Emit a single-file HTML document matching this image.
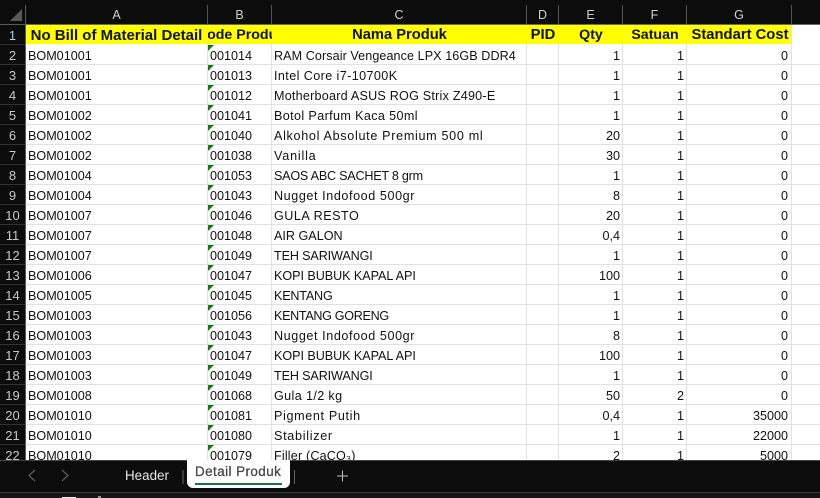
<!DOCTYPE html>
<html><head><meta charset="utf-8">
<style>
html,body{margin:0;padding:0;background:#0c0c0c}
#p{position:relative;width:820px;height:498px;overflow:hidden;background:#0c0c0c;font-family:"Liberation Sans",sans-serif}
#p div{position:absolute;white-space:nowrap}
#sheet{left:26px;top:25px;width:794px;height:435px;background:#fff;overflow:hidden}
.hl{left:0;width:794px;height:1px;background:#e1e1e1}
.vl{top:0;width:1px;height:435px;background:#e1e1e1}
.r{left:0;width:794px;height:20px;font-size:12.6px;line-height:22px;color:#111}
.a{left:2px}
.b{left:184px}
.c{left:248px}
.e{right:200px;width:60px;text-align:right}
.f{right:136px;width:60px;text-align:right}
.g{right:32px;width:90px;text-align:right}
.t{left:182px;top:0;width:0;height:0;border-top:6px solid #107c10;border-right:6px solid transparent}
#y{left:0;top:0;width:765px;height:19px;background:#ff0;overflow:hidden}
.h{top:0;height:19px;line-height:21px;font-weight:bold;font-size:14.2px;color:#111;text-align:center;overflow:hidden}
.ch{top:5px;height:19px;line-height:20px;font-size:12.5px;color:#cfcfcf;text-align:center;border-right:1px solid #555;box-sizing:border-box}
.rh{left:0;width:25px;height:20px;line-height:21px;font-size:13px;color:#c8c8c8;text-align:center;box-sizing:border-box;border-bottom:1px solid #333}
</style></head><body>
<div id="p">
<div style="left:0;top:0;width:820px;height:5px;background:#0c0c0c"></div>
<svg style="position:absolute;left:0;top:0" width="26" height="25"><polygon points="22,9 22,21 10,21" fill="#5a5a5a"/></svg>
<div style="left:25px;top:5px;width:1px;height:455px;background:#5a5a5a"></div>
<div style="left:26px;top:24px;width:794px;height:1px;background:#6a6a6a"></div>
<div style="left:0;top:24px;width:25px;height:1px;background:#5a5a5a"></div>
<div class="ch" style="left:26px;width:182px">A</div>
<div class="ch" style="left:208px;width:64px">B</div>
<div class="ch" style="left:272px;width:255px">C</div>
<div class="ch" style="left:527px;width:32px">D</div>
<div class="ch" style="left:559px;width:64px">E</div>
<div class="ch" style="left:623px;width:64px">F</div>
<div class="ch" style="left:687px;width:105px">G</div>

<div class="rh" style="top:25px;color:#9fd3e8">1</div>
<div class="rh" style="top:45px">2</div>
<div class="rh" style="top:65px">3</div>
<div class="rh" style="top:85px">4</div>
<div class="rh" style="top:105px">5</div>
<div class="rh" style="top:125px">6</div>
<div class="rh" style="top:145px">7</div>
<div class="rh" style="top:165px">8</div>
<div class="rh" style="top:185px">9</div>
<div class="rh" style="top:205px">10</div>
<div class="rh" style="top:225px">11</div>
<div class="rh" style="top:245px">12</div>
<div class="rh" style="top:265px">13</div>
<div class="rh" style="top:285px">14</div>
<div class="rh" style="top:305px">15</div>
<div class="rh" style="top:325px">16</div>
<div class="rh" style="top:345px">17</div>
<div class="rh" style="top:365px">18</div>
<div class="rh" style="top:385px">19</div>
<div class="rh" style="top:405px">20</div>
<div class="rh" style="top:425px">21</div>
<div class="rh" style="top:445px">22</div>

<div id="sheet">
<div class="vl" style="left:181px"></div><div class="vl" style="left:245px"></div><div class="vl" style="left:500px"></div><div class="vl" style="left:532px"></div><div class="vl" style="left:596px"></div><div class="vl" style="left:660px"></div><div class="vl" style="left:765px"></div>
<div class="hl" style="top:39px"></div><div class="hl" style="top:59px"></div><div class="hl" style="top:79px"></div><div class="hl" style="top:99px"></div><div class="hl" style="top:119px"></div><div class="hl" style="top:139px"></div><div class="hl" style="top:159px"></div><div class="hl" style="top:179px"></div><div class="hl" style="top:199px"></div><div class="hl" style="top:219px"></div><div class="hl" style="top:239px"></div><div class="hl" style="top:259px"></div><div class="hl" style="top:279px"></div><div class="hl" style="top:299px"></div><div class="hl" style="top:319px"></div><div class="hl" style="top:339px"></div><div class="hl" style="top:359px"></div><div class="hl" style="top:379px"></div><div class="hl" style="top:399px"></div><div class="hl" style="top:419px"></div>
<div id="y">
<div class="h" style="left:0;width:181px;font-size:15px">No Bill of Material Detail</div>
<div class="h" style="left:182px;width:64px"><span style="position:absolute;left:-17px;width:100px;text-align:center">Kode Produk</span></div>
<div class="h" style="left:246px;width:255px;font-size:14.7px">Nama Produk</div>
<div class="h" style="left:501px;width:32px;font-size:14.8px">PID</div>
<div class="h" style="left:533px;width:64px">Qty</div>
<div class="h" style="left:597px;width:64px">Satuan</div>
<div class="h" style="left:662px;width:104px;font-size:14.8px">Standart Cost</div>
</div>

<div class="r" style="top:20px"><div class="t"></div><div class="a">BOM01001</div><div class="b">001014</div><div class="c" style="letter-spacing:.07px">RAM Corsair Vengeance LPX 16GB DDR4</div><div class="e">1</div><div class="f">1</div><div class="g">0</div></div>
<div class="r" style="top:40px"><div class="t"></div><div class="a">BOM01001</div><div class="b">001013</div><div class="c" style="letter-spacing:.4px">Intel Core i7-10700K</div><div class="e">1</div><div class="f">1</div><div class="g">0</div></div>
<div class="r" style="top:60px"><div class="t"></div><div class="a">BOM01001</div><div class="b">001012</div><div class="c" style="letter-spacing:.22px">Motherboard ASUS ROG Strix Z490-E</div><div class="e">1</div><div class="f">1</div><div class="g">0</div></div>
<div class="r" style="top:80px"><div class="t"></div><div class="a">BOM01002</div><div class="b">001041</div><div class="c" style="letter-spacing:.37px">Botol Parfum Kaca 50ml</div><div class="e">1</div><div class="f">1</div><div class="g">0</div></div>
<div class="r" style="top:100px"><div class="t"></div><div class="a">BOM01002</div><div class="b">001040</div><div class="c" style="letter-spacing:.68px">Alkohol Absolute Premium 500 ml</div><div class="e">20</div><div class="f">1</div><div class="g">0</div></div>
<div class="r" style="top:120px"><div class="t"></div><div class="a">BOM01002</div><div class="b">001038</div><div class="c" style="letter-spacing:.8px">Vanilla</div><div class="e">30</div><div class="f">1</div><div class="g">0</div></div>
<div class="r" style="top:140px"><div class="t"></div><div class="a">BOM01004</div><div class="b">001053</div><div class="c" style="letter-spacing:-.23px">SAOS ABC SACHET 8 grm</div><div class="e">1</div><div class="f">1</div><div class="g">0</div></div>
<div class="r" style="top:160px"><div class="t"></div><div class="a">BOM01004</div><div class="b">001043</div><div class="c" style="letter-spacing:.58px">Nugget Indofood 500gr</div><div class="e">8</div><div class="f">1</div><div class="g">0</div></div>
<div class="r" style="top:180px"><div class="t"></div><div class="a">BOM01007</div><div class="b">001046</div><div class="c" style="letter-spacing:.5px">GULA RESTO</div><div class="e">20</div><div class="f">1</div><div class="g">0</div></div>
<div class="r" style="top:200px"><div class="t"></div><div class="a">BOM01007</div><div class="b">001048</div><div class="c">AIR GALON</div><div class="e">0,4</div><div class="f">1</div><div class="g">0</div></div>
<div class="r" style="top:220px"><div class="t"></div><div class="a">BOM01007</div><div class="b">001049</div><div class="c" style="letter-spacing:-.13px">TEH SARIWANGI</div><div class="e">1</div><div class="f">1</div><div class="g">0</div></div>
<div class="r" style="top:240px"><div class="t"></div><div class="a">BOM01006</div><div class="b">001047</div><div class="c" style="letter-spacing:-.05px">KOPI BUBUK KAPAL API</div><div class="e">100</div><div class="f">1</div><div class="g">0</div></div>
<div class="r" style="top:260px"><div class="t"></div><div class="a">BOM01005</div><div class="b">001045</div><div class="c" style="letter-spacing:-.2px">KENTANG</div><div class="e">1</div><div class="f">1</div><div class="g">0</div></div>
<div class="r" style="top:280px"><div class="t"></div><div class="a">BOM01003</div><div class="b">001056</div><div class="c" style="letter-spacing:-.33px">KENTANG GORENG</div><div class="e">1</div><div class="f">1</div><div class="g">0</div></div>
<div class="r" style="top:300px"><div class="t"></div><div class="a">BOM01003</div><div class="b">001043</div><div class="c" style="letter-spacing:.58px">Nugget Indofood 500gr</div><div class="e">8</div><div class="f">1</div><div class="g">0</div></div>
<div class="r" style="top:320px"><div class="t"></div><div class="a">BOM01003</div><div class="b">001047</div><div class="c" style="letter-spacing:-.05px">KOPI BUBUK KAPAL API</div><div class="e">100</div><div class="f">1</div><div class="g">0</div></div>
<div class="r" style="top:340px"><div class="t"></div><div class="a">BOM01003</div><div class="b">001049</div><div class="c" style="letter-spacing:-.13px">TEH SARIWANGI</div><div class="e">1</div><div class="f">1</div><div class="g">0</div></div>
<div class="r" style="top:360px"><div class="t"></div><div class="a">BOM01008</div><div class="b">001068</div><div class="c" style="letter-spacing:.37px">Gula 1/2 kg</div><div class="e">50</div><div class="f">2</div><div class="g">0</div></div>
<div class="r" style="top:380px"><div class="t"></div><div class="a">BOM01010</div><div class="b">001081</div><div class="c" style="letter-spacing:.64px">Pigment Putih</div><div class="e">0,4</div><div class="f">1</div><div class="g">35000</div></div>
<div class="r" style="top:400px"><div class="t"></div><div class="a">BOM01010</div><div class="b">001080</div><div class="c" style="letter-spacing:.7px">Stabilizer</div><div class="e">1</div><div class="f">1</div><div class="g">22000</div></div>
<div class="r" style="top:420px"><div class="t"></div><div class="a">BOM01010</div><div class="b">001079</div><div class="c" style="letter-spacing:.17px">Filler (CaCO₃)</div><div class="e">2</div><div class="f">1</div><div class="g">5000</div></div>
</div>

<div style="left:0;top:460px;width:820px;height:1px;background:#444"></div>
<div style="left:0;top:461px;width:820px;height:31px;background:#0c0c0c"></div>
<div style="left:0;top:492px;width:820px;height:1px;background:#3a3a3a"></div>
<div style="left:0;top:493px;width:820px;height:5px;background:#161616"></div>
<div style="left:62px;top:497px;width:14px;height:1px;background:#eee"></div>
<div style="left:98px;top:496px;width:3px;height:2px;background:#999"></div>

<svg style="position:absolute;left:0;top:460px" width="360" height="32" fill="none">
<path d="M35 10 L29 15.500 L35 21" stroke="#5e5e5e" stroke-width="1.200"/>
<path d="M62 10 L68 15.500 L62 21" stroke="#5e5e5e" stroke-width="1.200"/>
<path d="M183 10 V24" stroke="#666" stroke-width="1"/>
<path d="M294.500 10 V24" stroke="#666" stroke-width="1"/>
<path d="M337 16 H348 M342.500 10.500 V21.500" stroke="#bdbdbd" stroke-width="1"/>
</svg>
<div style="left:125px;top:467px;line-height:18px;font-size:13.4px;color:#e6e6e6">Header</div>
<div style="left:187px;top:460px;width:103px;height:28px;background:#fff;border-radius:0 0 6px 6px"></div>
<div style="left:195px;top:463px;line-height:18px;font-size:13.4px;color:#444;letter-spacing:.45px;-webkit-text-stroke:.25px #444">Detail Produk</div>
<div style="left:195px;top:483px;width:87px;height:2px;background:#107c41"></div>
</div>
</body></html>
